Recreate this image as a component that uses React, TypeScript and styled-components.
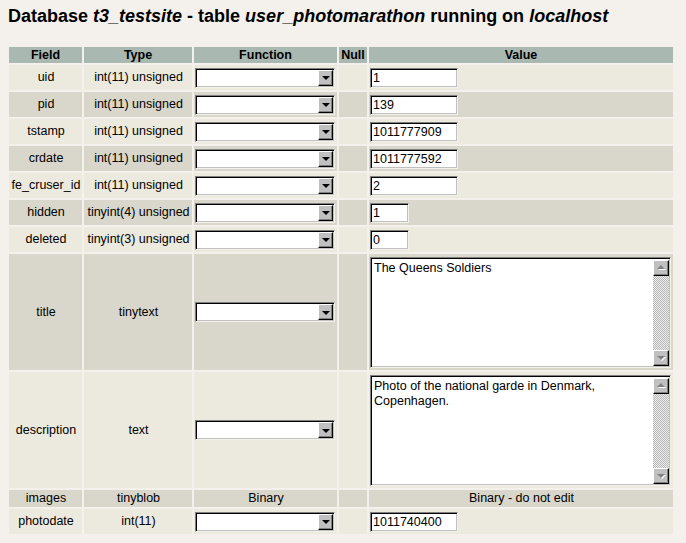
import React from 'react';
import styled, { createGlobalStyle } from 'styled-components';

const GlobalStyle = createGlobalStyle`
  html, body {
    margin: 0;
    padding: 0;
    background: #f4f1ec;
  }
  body {
    font-family: "Liberation Sans", Arial, Helvetica, sans-serif;
    color: #000;
  }
`;

type Field = {
  name: string;
  type: string;
  kind: 'input' | 'short' | 'area' | 'binary';
  value?: string;
};

const fields: Field[] = [
  { name: 'uid', type: 'int(11) unsigned', kind: 'input', value: '1' },
  { name: 'pid', type: 'int(11) unsigned', kind: 'input', value: '139' },
  { name: 'tstamp', type: 'int(11) unsigned', kind: 'input', value: '1011777909' },
  { name: 'crdate', type: 'int(11) unsigned', kind: 'input', value: '1011777592' },
  { name: 'fe_cruser_id', type: 'int(11) unsigned', kind: 'input', value: '2' },
  { name: 'hidden', type: 'tinyint(4) unsigned', kind: 'short', value: '1' },
  { name: 'deleted', type: 'tinyint(3) unsigned', kind: 'short', value: '0' },
  { name: 'title', type: 'tinytext', kind: 'area', value: 'The Queens Soldiers' },
  {
    name: 'description',
    type: 'text',
    kind: 'area',
    value: 'Photo of the national garde in Denmark, Copenhagen.',
  },
  { name: 'images', type: 'tinyblob', kind: 'binary' },
  { name: 'photodate', type: 'int(11)', kind: 'input', value: '1011740400' },
];

const App = () => {
  return (
    <Page>
      <GlobalStyle />
      <Title>
        Database <em>t3_testsite</em> - table <em>user_photomarathon</em> running on{' '}
        <em>localhost</em>
      </Title>
      <Table>
        <colgroup>
          <col style={{ width: 73 }} />
          <col style={{ width: 108 }} />
          <col style={{ width: 143 }} />
          <col style={{ width: 28 }} />
          <col style={{ width: 304 }} />
        </colgroup>
        <thead>
          <tr>
            <Head>Field</Head>
            <Head>Type</Head>
            <Head>Function</Head>
            <Head>Null</Head>
            <Head>Value</Head>
          </tr>
        </thead>
        <tbody>
          {fields.map((f, i) => {
            const dark = i % 2 === 1;
            const h = f.kind === 'area' ? 116 : f.kind === 'binary' ? 17 : 25;
            return (
              <tr key={f.name}>
                <Cell $dark={dark} $h={h} $center>
                  {f.name}
                </Cell>
                <Cell $dark={dark} $h={h} $center>
                  {f.type}
                </Cell>
                {f.kind === 'binary' ? (
                  <Cell $dark={dark} $h={h} $center>
                    Binary
                  </Cell>
                ) : (
                  <Cell $dark={dark} $h={h}>
                    <Select>
                      <SelectButton>
                        <DownArrow />
                      </SelectButton>
                    </Select>
                  </Cell>
                )}
                <Cell $dark={dark} $h={h} />
                {f.kind === 'binary' ? (
                  <Cell $dark={dark} $h={h} $center>
                    Binary - do not edit
                  </Cell>
                ) : f.kind === 'area' ? (
                  <Cell $dark={dark} $h={h}>
                    <TextArea>
                      <AreaText>{f.value}</AreaText>
                      <ScrollBar>
                        <ScrollButton>
                          <GreyArrow $up />
                        </ScrollButton>
                        <ScrollTrack />
                        <ScrollButton>
                          <GreyArrow />
                        </ScrollButton>
                      </ScrollBar>
                    </TextArea>
                  </Cell>
                ) : (
                  <Cell $dark={dark} $h={h}>
                    <TextInput $w={f.kind === 'short' ? 39 : 88}>{f.value}</TextInput>
                  </Cell>
                )}
              </tr>
            );
          })}
        </tbody>
      </Table>
    </Page>
  );
};

export default App;

const Page = styled.div`
  padding: 6px 0 0 8px;
`;

const Title = styled.h1`
  margin: 0;
  font-size: 18px;
  line-height: 20px;
  font-weight: bold;
  white-space: nowrap;

  em {
    font-style: italic;
  }
`;

const Table = styled.table`
  margin: 19px 0 0 -1px;
  border-spacing: 2px;
  table-layout: fixed;
  width: 668px;
  font-size: 12.5px;
`;

const Head = styled.th`
  background: #a9b8b1;
  height: 16px;
  padding: 0;
  font-size: 12.5px;
  font-weight: bold;
  text-align: center;
  vertical-align: middle;
  line-height: 16px;
`;

const Cell = styled.td<{ $dark: boolean; $h: number; $center?: boolean }>`
  background: ${(p) => (p.$dark ? '#d9d6cb' : '#ece9df')};
  height: ${(p) => p.$h}px;
  padding: 0 0 0 1px;
  text-align: ${(p) => (p.$center ? 'center' : 'left')};
  vertical-align: middle;
  white-space: nowrap;
  line-height: 15px;
`;

const Select = styled.div`
  position: relative;
  box-sizing: border-box;
  width: 140px;
  height: 20px;
  background: #fff;
  border: 1px solid;
  border-color: #808080 #f4f1ec #f4f1ec #808080;
  box-shadow: inset 1px 1px 0 #000, inset -1px -1px 0 #c0c0c0;
`;

const SelectButton = styled.div`
  position: absolute;
  right: 1px;
  top: 1px;
  box-sizing: border-box;
  width: 15px;
  height: 16px;
  background: #c0c0c0;
  border: 1px solid;
  border-color: #fff #000 #000 #fff;
  box-shadow: inset -1px -1px 0 #808080;
  display: flex;
  align-items: center;
  justify-content: center;
`;

const DownArrow = styled.div`
  width: 0;
  height: 0;
  margin-top: 1px;
  border-left: 4px solid transparent;
  border-right: 4px solid transparent;
  border-top: 4px solid #000;
`;

const TextInput = styled.div<{ $w: number }>`
  box-sizing: border-box;
  width: ${(p) => p.$w}px;
  height: 20px;
  padding: 2px 0 0 2px;
  background: #fff;
  border: 1px solid;
  border-color: #808080 #f4f1ec #f4f1ec #808080;
  box-shadow: inset 1px 1px 0 #000, inset -1px -1px 0 #c0c0c0;
  font-size: 12.5px;
  line-height: 15px;
`;

const TextArea = styled.div`
  box-sizing: border-box;
  display: flex;
  width: 301px;
  height: 111px;
  background: #fff;
  border: 1px solid;
  border-color: #808080 #f4f1ec #f4f1ec #808080;
  box-shadow: inset 1px 1px 0 #000, inset -1px -1px 0 #c0c0c0;
  padding: 2px 1px 1px 2px;
`;

const AreaText = styled.div`
  flex: 1;
  padding: 1px 0 0 1px;
  font-size: 12.5px;
  line-height: 15px;
  white-space: normal;
`;

const ScrollBar = styled.div`
  width: 16px;
  display: flex;
  flex-direction: column;
`;

const ScrollButton = styled.div`
  box-sizing: border-box;
  width: 16px;
  height: 16px;
  background: #c0c0c0;
  border: 1px solid;
  border-color: #fff #000 #000 #fff;
  box-shadow: inset -1px -1px 0 #808080;
  display: flex;
  align-items: center;
  justify-content: center;
`;

const ScrollTrack = styled.div`
  flex: 1;
  background: repeating-conic-gradient(#b8b8b8 0 25%, #ececec 0 50%) 0 0 / 2px 2px;
`;

const GreyArrow = styled.div<{ $up?: boolean }>`
  width: 0;
  height: 0;
  border-left: 4px solid transparent;
  border-right: 4px solid transparent;
  ${(p) =>
    p.$up
      ? 'border-bottom: 4px solid #808080; margin-top: -1px;'
      : 'border-top: 4px solid #808080; margin-top: 1px;'}
  filter: drop-shadow(1px 1px 0 #fff);
`;
